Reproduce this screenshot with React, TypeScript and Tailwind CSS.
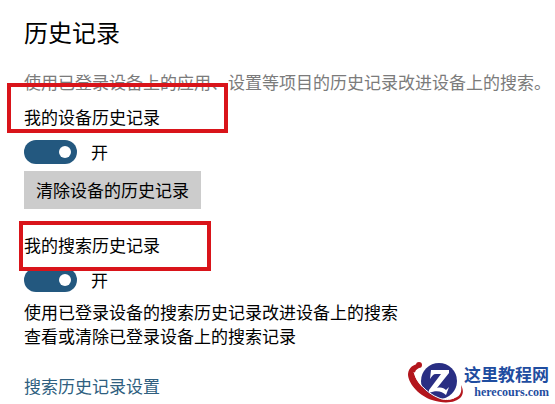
import React from "react";

function Highlight({ className }: { className: string }) {
  return (
    <span
      aria-hidden="true"
      className={`pointer-events-none absolute border-4 border-[#d9141a] ${className}`}
    />
  );
}

function Toggle({ id }: { id: string }) {
  return (
    <div className="flex h-6 items-center gap-[14px]">
      <input
        id={id}
        type="checkbox"
        role="switch"
        defaultChecked
        className="flex h-6 w-[53px] appearance-none items-center justify-start rounded-full bg-[#8a8a8a] px-[6px] before:size-3 before:rounded-full before:bg-white checked:justify-end checked:bg-[#23587f]"
      />
      <label htmlFor={id}>开</label>
    </div>
  );
}

function Emblem() {
  return (
    <svg viewBox="0 0 58 44" className="h-11 w-[58px] shrink-0" aria-hidden="true">
      <circle cx="33" cy="21" r="18" fill="#292e83" />
      <path
        d="M12 4C5 5 2 10 2 15C3 25 14 36 26 40C38 44 50 43 55 37C58 33 57 29 55 25C56 31 55 36 49 38C43 40 37 40 32 38C24 35 17 29 12 22C8 16 7 11 13 8Z"
        fill="#b3161d"
      />
      <path d="M8 12C10 21 20 33 33 38C38 40 43 40 48 38" fill="none" stroke="#fff" strokeWidth="1" />
      <circle cx="13" cy="5" r="3" fill="#b3161d" />
      <path
        d="M25 10H43V13L31 28C35 27 38 28 40 30L43 27L40 35C36 31 30 30 23 33V30L35 14H30C27 14 26 16 24 19Z"
        fill="#fff"
      />
    </svg>
  );
}

export default function App() {
  return (
    <main className="bg-white pt-4 pr-[6px] pl-6 font-['Noto_Sans_CJK_SC',sans-serif] text-[17px] leading-6 whitespace-nowrap text-black">
      <h1 className="text-2xl leading-8">历史记录</h1>
      <p className="mt-[22px] text-[#7b7b7b]">
        使用已登录设备上的应用、设置等项目的历史记录改进设备上的搜索。
      </p>

      <section className="mt-[11px]">
        <h2 className="relative w-fit">
          我的设备历史记录
          <Highlight className="-top-[22px] -left-[17px] h-[50px] w-[221px]" />
        </h2>
        <div className="mt-[11px]">
          <Toggle id="device-history" />
        </div>
        <button type="button" className="mt-[7px] h-[38px] bg-[#cccccc] px-3">
          清除设备的历史记录
        </button>
      </section>

      <section className="mt-6">
        <h2 className="relative z-10 w-fit">
          我的搜索历史记录
          <Highlight className="-top-3 -left-[5px] h-[50px] w-[192px]" />
        </h2>
        <div className="mt-[11px]">
          <Toggle id="search-history" />
        </div>
        <p className="mt-2">
          使用已登录设备的搜索历史记录改进设备上的搜索
          <br />
          查看或清除已登录设备上的搜索记录
        </p>
      </section>

      <footer className="mt-3 flex items-center justify-between">
        <a href="#search-settings" className="pt-2 text-[#2f5f80]">
          搜索历史记录设置
        </a>
        <div className="flex items-center">
          <Emblem />
          <div className="flex flex-col items-end text-[#1f4da0]">
            <span className="leading-5 font-bold">这里教程网</span>
            <span className="font-['Liberation_Serif',serif] text-xs leading-4 font-bold text-[#1f4da0]">
              herecours.com
            </span>
          </div>
        </div>
      </footer>
    </main>
  );
}
